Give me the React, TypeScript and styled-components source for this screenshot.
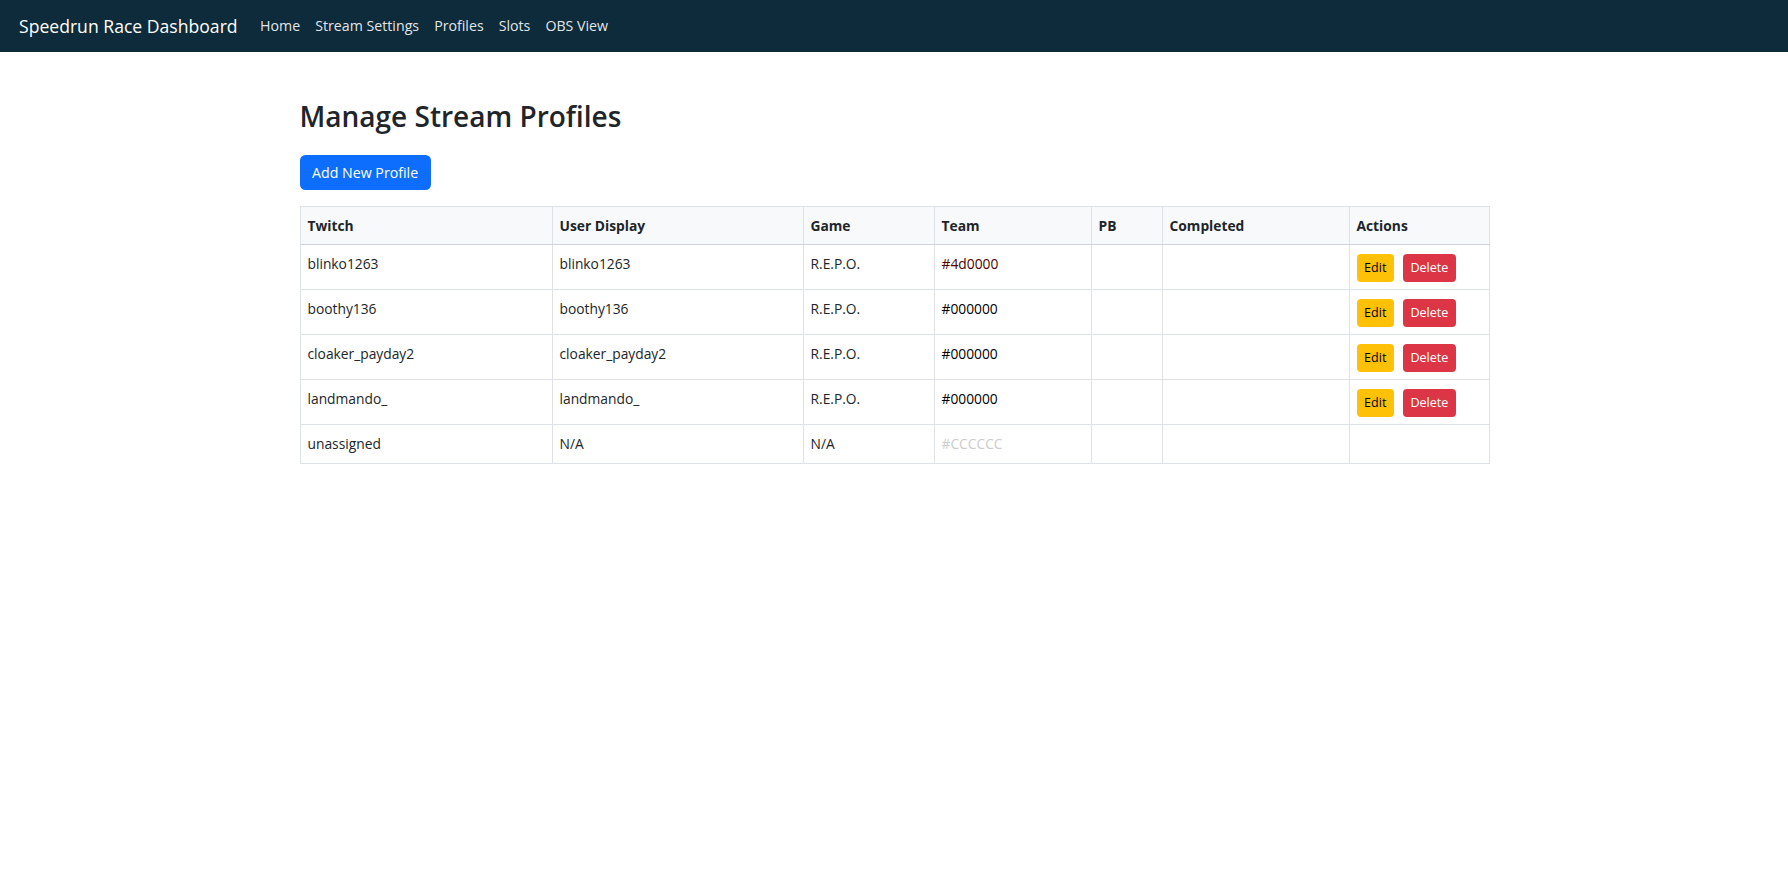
import styled, { createGlobalStyle } from "styled-components";

type Profile = {
  twitch: string;
  display: string;
  game: string;
  team: string;
  pb: string;
  completed: string;
  editable: boolean;
};

const profiles: Profile[] = [
  { twitch: "blinko1263", display: "blinko1263", game: "R.E.P.O.", team: "#4d0000", pb: "", completed: "", editable: true },
  { twitch: "boothy136", display: "boothy136", game: "R.E.P.O.", team: "#000000", pb: "", completed: "", editable: true },
  { twitch: "cloaker_payday2", display: "cloaker_payday2", game: "R.E.P.O.", team: "#000000", pb: "", completed: "", editable: true },
  { twitch: "landmando_", display: "landmando_", game: "R.E.P.O.", team: "#000000", pb: "", completed: "", editable: true },
  { twitch: "unassigned", display: "N/A", game: "N/A", team: "#CCCCCC", pb: "", completed: "", editable: false },
];

const columns = [
  { label: "Twitch", width: 252 },
  { label: "User Display", width: 251 },
  { label: "Game", width: 131 },
  { label: "Team", width: 157 },
  { label: "PB", width: 71 },
  { label: "Completed", width: 187 },
  { label: "Actions", width: 140 },
];

const navLinks = ["Home", "Stream Settings", "Profiles", "Slots", "OBS View"];

export default function App() {
  return (
    <>
      <GlobalStyle />
      <NavBar>
        <Brand href="#">Speedrun Race Dashboard</Brand>
        <NavList>
          {navLinks.map((link) => (
            <NavLink key={link} href="#">
              {link}
            </NavLink>
          ))}
        </NavList>
      </NavBar>
      <Container>
        <PageTitle>Manage Stream Profiles</PageTitle>
        <PrimaryButton>Add New Profile</PrimaryButton>
        <Table>
          <colgroup>
            {columns.map((col) => (
              <col key={col.label} style={{ width: col.width }} />
            ))}
          </colgroup>
          <thead>
            <tr>
              {columns.map((col) => (
                <HeadCell key={col.label}>{col.label}</HeadCell>
              ))}
            </tr>
          </thead>
          <tbody>
            {profiles.map((p) => (
              <tr key={p.twitch}>
                <Cell>{p.twitch}</Cell>
                <Cell>{p.display}</Cell>
                <Cell>{p.game}</Cell>
                <Cell style={{ color: p.team }}>{p.team}</Cell>
                <Cell>{p.pb}</Cell>
                <Cell>{p.completed}</Cell>
                <Cell>
                  {p.editable && (
                    <Actions>
                      <SmallButton $variant="warning">Edit</SmallButton>
                      <SmallButton $variant="danger">Delete</SmallButton>
                    </Actions>
                  )}
                </Cell>
              </tr>
            ))}
          </tbody>
        </Table>
      </Container>
    </>
  );
}

const GlobalStyle = createGlobalStyle`
  * {
    box-sizing: border-box;
  }
  body {
    margin: 0;
    background: #ffffff;
    color: #212529;
    font-family: "Open Sans", "Noto Sans", sans-serif;
    font-size: 13.8px;
    line-height: 22px;
  }
`;

const NavBar = styled.nav`
  display: flex;
  align-items: center;
  height: 52px;
  padding: 0 19px;
  background-color: #0e2b3b;
`;

const Brand = styled.a`
  margin-right: 15px;
  color: #ffffff;
  font-size: 17.6px;
  text-decoration: none;
  white-space: nowrap;
`;

const NavList = styled.div`
  display: flex;
  align-items: center;
`;

const NavLink = styled.a`
  padding: 7px 7.5px;
  color: rgba(255, 255, 255, 0.9);
  font-size: 14.2px;
  text-decoration: none;
`;

const Container = styled.main`
  width: 1189px;
  margin: 0 auto;
  padding-top: 48px;
`;

const PageTitle = styled.h2`
  margin: 0 0 21px;
  font-size: 28px;
  font-weight: 600;
  line-height: 1.2;
`;

const PrimaryButton = styled.button`
  display: inline-block;
  height: 35px;
  padding: 0 12.5px;
  border: none;
  border-radius: 5.5px;
  background-color: #0d6efd;
  color: #ffffff;
  font-family: inherit;
  font-size: 14.2px;
  cursor: pointer;
`;

const Table = styled.table`
  width: 100%;
  margin-top: 16px;
  border-collapse: collapse;
  table-layout: fixed;
  border: 1px solid #dee2e6;
`;

const HeadCell = styled.th`
  padding: 8px 7px 7px;
  border: 1px solid #dee2e6;
  border-bottom-color: #cfd3d7;
  background-color: #f8f9fa;
  font-weight: 700;
  text-align: left;
  vertical-align: top;
`;

const Cell = styled.td`
  height: 44px;
  padding: 8px 7px 7px;
  border: 1px solid #dee2e6;
  vertical-align: top;
  tr:last-child & {
    height: 39px;
  }
`;

const Actions = styled.div`
  display: flex;
  gap: 9px;
  padding-top: 1px;
`;

const SmallButton = styled.button<{ $variant: "warning" | "danger" }>`
  height: 28px;
  padding: 0 7.5px;
  border: none;
  border-radius: 4px;
  background-color: ${(p) => (p.$variant === "warning" ? "#ffc107" : "#dc3545")};
  color: ${(p) => (p.$variant === "warning" ? "#000000" : "#ffffff")};
  font-family: inherit;
  font-size: 12.6px;
  cursor: pointer;
`;
